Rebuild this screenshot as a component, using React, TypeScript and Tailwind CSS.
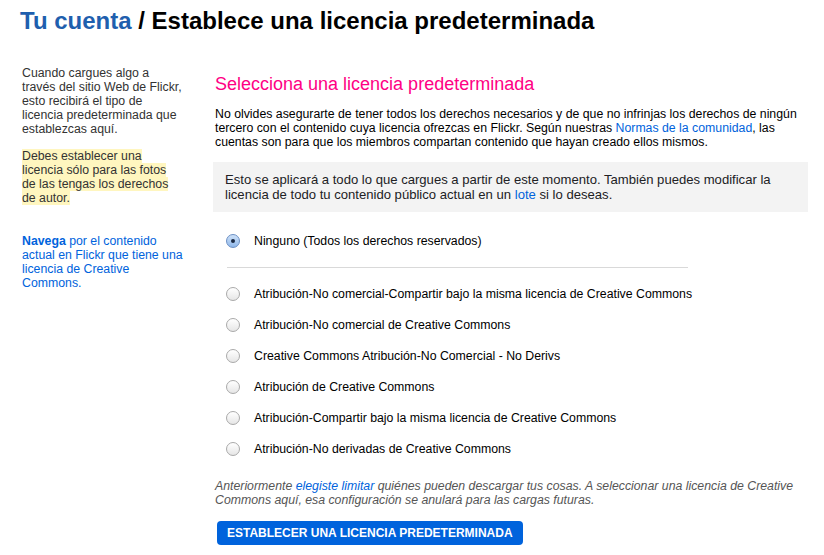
import React from "react";

const licenses = [
  "Atribución-No comercial-Compartir bajo la misma licencia de Creative Commons",
  "Atribución-No comercial de Creative Commons",
  "Creative Commons Atribución-No Comercial - No Derivs",
  "Atribución de Creative Commons",
  "Atribución-Compartir bajo la misma licencia de Creative Commons",
  "Atribución-No derivadas de Creative Commons",
];

function Radio({ checked }: { checked?: boolean }) {
  if (checked) {
    return (
      <span className="flex h-[14px] w-[14px] shrink-0 items-center justify-center rounded-full border border-[#6b8fc4] bg-gradient-to-b from-[#cfe2f8] to-[#8fb8ea]">
        <span className="h-[4px] w-[4px] rounded-full bg-[#1b2a44]" />
      </span>
    );
  }
  return (
    <span className="h-[14px] w-[14px] shrink-0 rounded-full border border-[#a9a9a9] bg-gradient-to-b from-white to-[#e6e6e6]" />
  );
}

export default function App() {
  return (
    <div className="min-h-screen bg-white font-['Liberation_Sans',Arial,sans-serif] text-[#212124]">
      <h1 className="px-[20px] pt-[7px] text-[24px] font-bold leading-[28px] text-black">
        <span className="text-[#1f5fae]">Tu cuenta</span> / Establece una licencia predeterminada
      </h1>

      <div className="flex pt-[28px]">
        <aside className="w-[213px] shrink-0 pl-[22px] pr-[30px] text-[12.3px] leading-[14px] text-[#333]">
          <p className="pt-[3px]">
            Cuando cargues algo a través del sitio Web de Flickr, esto recibirá el tipo de licencia predeterminada que establezcas aquí.
          </p>
          <p className="mt-[13px]">
            <span className="bg-[#fff6bf] box-decoration-clone">
              Debes establecer una licencia sólo para las fotos de las tengas los derechos de autor.
            </span>
          </p>
          <p className="mt-[29px] text-[#0063dc]">
            <span className="font-bold">Navega</span> por el contenido actual en Flickr que tiene una licencia de Creative Commons.
          </p>
        </aside>

        <main className="w-[595px] pt-[10px]">
          <h2 className="pl-[2px] text-[18px] leading-[22px] text-[#ff0084]">Selecciona una licencia predeterminada</h2>
          <p className="mt-[12px] pl-[2px] text-[12.3px] leading-[14px] text-black">
            No olvides asegurarte de tener todos los derechos necesarios y de que no infrinjas los derechos de ningún tercero con el contenido cuya licencia ofrezcas en Flickr. Según nuestras{" "}
            <span className="text-[#0063dc]">Normas de la comunidad</span>, las cuentas son para que los miembros compartan contenido que hayan creado ellos mismos.
          </p>

          <div className="mt-[13px] bg-[#f3f3f3] px-[12px] py-[10px] text-[13.1px] leading-[15px] text-[#212124]">
            Esto se aplicará a todo lo que cargues a partir de este momento. También puedes modificar la licencia de todo tu contenido público actual en un{" "}
            <span className="text-[#0063dc]">lote</span> si lo deseas.
          </div>

          <div className="pl-[12px] pt-[22px] text-[12.3px] leading-[14px] text-black">
            <label className="flex items-center gap-[14px] pl-[1px]">
              <Radio checked />
              <span>Ninguno (Todos los derechos reservados)</span>
            </label>
            <div className="my-[19px] ml-[2px] mr-[120px] border-t border-[#d9d9d9]" />
            <div className="flex flex-col gap-[17px]">
              {licenses.map((l) => (
                <label key={l} className="flex items-center gap-[14px] pl-[1px]">
                  <Radio />
                  <span>{l}</span>
                </label>
              ))}
            </div>
          </div>

          <p className="mt-[23px] pl-[2px] text-[12.3px] italic leading-[14px] text-[#555]">
            Anteriormente <span className="text-[#0063dc]">elegiste limitar</span> quiénes pueden descargar tus cosas. A seleccionar una licencia de Creative Commons aquí, esa configuración se anulará para las cargas futuras.
          </p>

          <button className="mt-[14px] ml-[4px] h-[24px] rounded-[4px] bg-[#0063dc] px-[10px] text-[12px] font-bold leading-[24px] text-white">
            ESTABLECER UNA LICENCIA PREDETERMINADA
          </button>
        </main>
      </div>
    </div>
  );
}
